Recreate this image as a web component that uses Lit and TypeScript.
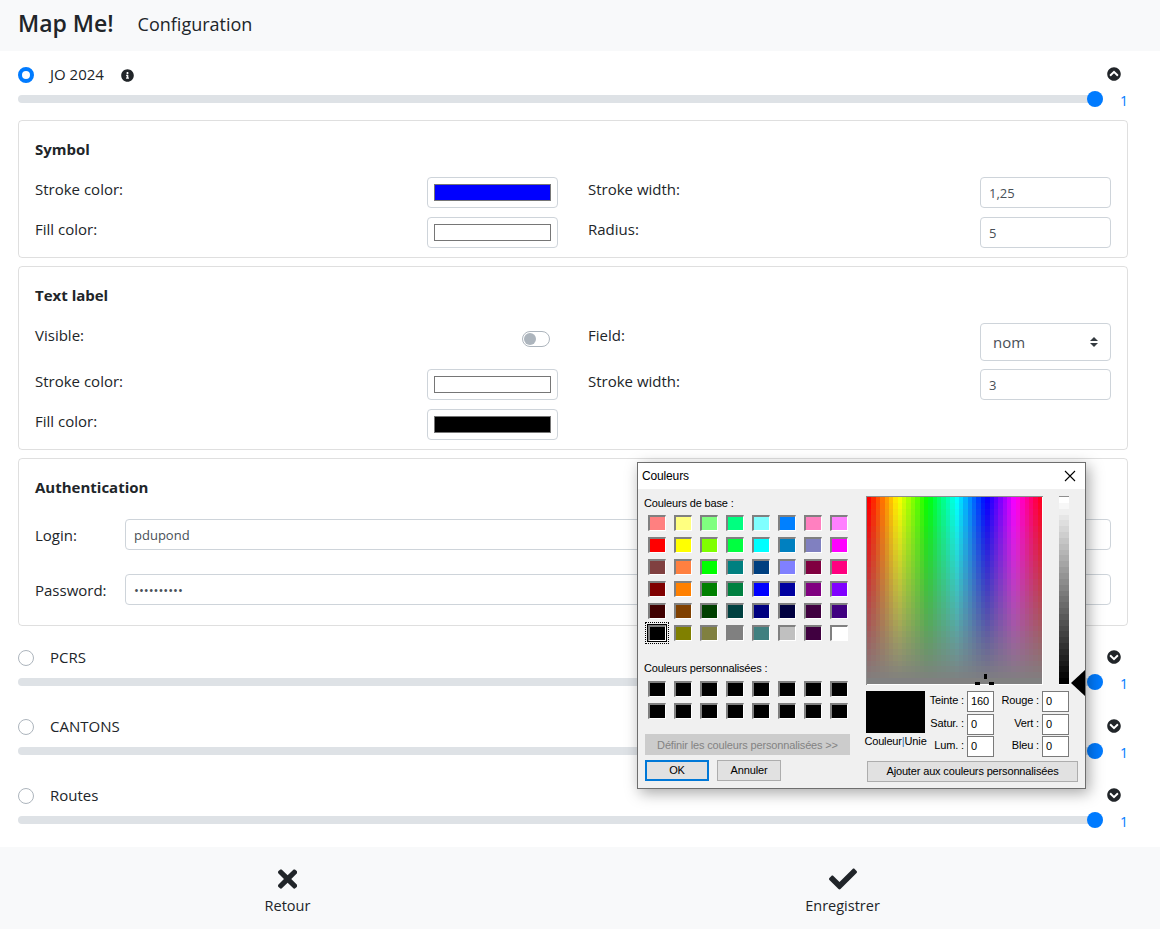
import { LitElement, html, css, svg } from 'lit';
import { customElement, property } from 'lit/decorators.js';

const ICONS = {
  info: 'M256 8C119.043 8 8 119.083 8 256c0 136.997 111.043 248 248 248s248-111.003 248-248C504 119.083 392.957 8 256 8zm0 110c23.196 0 42 18.804 42 42s-18.804 42-42 42-42-18.804-42-42 18.804-42 42-42zm56 254c0 6.627-5.373 12-12 12h-88c-6.627 0-12-5.373-12-12v-24c0-6.627 5.373-12 12-12h12v-64h-12c-6.627 0-12-5.373-12-12v-24c0-6.627 5.373-12 12-12h64c6.627 0 12 5.373 12 12v100h12c6.627 0 12 5.373 12 12v24z',
  up: 'M8 256C8 119 119 8 256 8s248 111 248 248-111 248-248 248S8 393 8 256zm231-113.9L103.5 277.6c-9.4 9.4-9.4 24.6 0 33.9l17 17c9.4 9.4 24.6 9.4 33.9 0L256 226.9l101.6 101.6c9.4 9.4 24.6 9.4 33.9 0l17-17c9.4-9.4 9.4-24.6 0-33.9L273 142.1c-9.4-9.4-24.6-9.4-34 0z',
  down: 'M504 256c0 137-111 248-248 248S8 393 8 256 119 8 256 8s248 111 248 248zM273 369.9l135.5-135.5c9.4-9.4 9.4-24.6 0-33.9l-17-17c-9.4-9.4-24.6-9.4-33.9 0L256 285.1 154.4 183.5c-9.4-9.4-24.6-9.4-33.9 0l-17 17c-9.4 9.4-9.4 24.6 0 33.9L239 369.9c9.4 9.4 24.6 9.4 34 0z',
  check: 'M173.898 439.404l-166.4-166.4c-9.997-9.997-9.997-26.206 0-36.204l36.203-36.204c9.997-9.998 26.207-9.998 36.204 0L192 312.69 432.095 72.596c9.997-9.997 26.207-9.997 36.204 0l36.203 36.204c9.997 9.997 9.997 26.206 0 36.204l-294.4 294.401c-9.998 9.997-26.207 9.997-36.204-.001z',
  times: 'M242.72 256l100.07-100.07c12.28-12.28 12.28-32.19 0-44.48l-22.24-22.24c-12.28-12.28-32.19-12.28-44.48 0L176 189.28 75.93 89.21c-12.28-12.28-32.19-12.28-44.48 0L9.21 111.45c-12.28 12.28-12.28 32.19 0 44.48L109.28 256 9.21 356.07c-12.28 12.28-12.28 32.19 0 44.48l22.24 22.24c12.28 12.28 32.2 12.28 44.48 0L176 322.72l100.07 100.07c12.28 12.28 32.2 12.28 44.48 0l22.24-22.24c12.28-12.28 12.28-32.19 0-44.48L242.72 256z',
};

const BASE_COLORS = [
  '#ff8080', '#ffff80', '#80ff80', '#00ff80', '#80ffff', '#0080ff', '#ff80c0', '#ff80ff',
  '#ff0000', '#ffff00', '#80ff00', '#00ff40', '#00ffff', '#0080c0', '#8080c0', '#ff00ff',
  '#804040', '#ff8040', '#00ff00', '#008080', '#004080', '#8080ff', '#800040', '#ff0080',
  '#800000', '#ff8000', '#008000', '#008040', '#0000ff', '#0000a0', '#800080', '#8000ff',
  '#400000', '#804000', '#004000', '#004040', '#000080', '#000040', '#400040', '#400080',
  '#000000', '#808000', '#808040', '#808080', '#408080', '#c0c0c0', '#400040', '#ffffff',
];

const SPECTRUM_COLS = 40;
const SPECTRUM_ROWS = 32;

function spectrumCells() {
  const cells = [];
  for (let row = 0; row < SPECTRUM_ROWS; row++) {
    for (let col = 0; col < SPECTRUM_COLS; col++) {
      const hue = (col * 360) / SPECTRUM_COLS;
      const sat = 100 - (row * 100) / (SPECTRUM_ROWS - 1);
      cells.push(svg`<rect x=${col} y=${row} width="1.05" height="1.05" fill="hsl(${hue} ${sat}% 50%)"></rect>`);
    }
  }
  return cells;
}

function lumCells() {
  const cells = [];
  for (let row = 0; row < SPECTRUM_ROWS; row++) {
    const lum = 100 - (row * 100) / (SPECTRUM_ROWS - 1);
    cells.push(svg`<rect x="0" y=${row} width="1" height="1.05" fill="hsl(0 0% ${lum}%)"></rect>`);
  }
  return cells;
}

@customElement('color-dialog')
export class ColorDialog extends LitElement {
  static styles = css`
    :host {
      background-color: #F0F0F0;
      border: 1px solid #6E6E6E;
      box-shadow: 3px 4px 14px rgba(0, 0, 0, 0.35);
      box-sizing: border-box;
      color: #000000;
      display: block;
      font-family: "Liberation Sans", Arial, sans-serif;
      font-size: 11px;
      height: 327px;
      left: 637px;
      letter-spacing: -0.15px;
      overflow: visible;
      position: absolute;
      top: 462px;
      width: 449px;
    }

    header {
      align-items: center;
      background-color: #FFFFFF;
      display: flex;
      font-size: 12px;
      height: 26px;
      justify-content: space-between;
      padding: 0 9px 0 4px;
    }

    header svg {
      display: block;
    }

    .body {
      display: flex;
      height: 299px;
      overflow: hidden;
      position: relative;
    }

    .left {
      box-sizing: border-box;
      padding: 6px 0 0 6px;
      width: 228px;
    }

    .caption {
      line-height: 16px;
    }

    .swatches {
      display: grid;
      gap: 6px 8px;
      grid-template-columns: repeat(8, 18px);
      grid-auto-rows: 16px;
      margin: 4px 0 0 4px;
    }

    .custom-caption {
      margin-top: 19px;
    }

    .swatch {
      border-color: #808080 #FFFFFF #FFFFFF #808080;
      border-style: solid;
      border-width: 2px 1px 1px 2px;
      box-sizing: border-box;
    }

    .swatch.selected {
      box-shadow: 0 0 0 1px #000000;
      outline: 1px dotted #000000;
      outline-offset: 2px;
    }

    .swatches.custom {
      margin-top: 5px;
    }

    .custom-define {
      background-color: #CCCCCC;
      border: 1px solid #CCCCCC;
      box-sizing: border-box;
      color: #838383;
      height: 21px;
      line-height: 20px;
      margin: 15px 0 0 1px;
      text-align: center;
      width: 205px;
    }

    .actions {
      display: flex;
      gap: 8px;
      margin: 5px 0 0 1px;
    }

    .btn {
      background-color: #E1E1E1;
      border: 1px solid #ADADAD;
      box-sizing: border-box;
      height: 21px;
      line-height: 19px;
      text-align: center;
      width: 64px;
    }

    .btn.default {
      border: 2px solid #0078D7;
      line-height: 17px;
    }

    .right {
      display: flex;
      flex-direction: column;
      padding-top: 7px;
    }

    .pickers {
      display: flex;
      gap: 16px;
      height: 189px;
    }

    .spectrum {
      background-color: #FFFFFF;
      box-sizing: border-box;
      border-left: 1px solid #8E8E8E;
      border-top: 1px solid #8E8E8E;
      height: 189px;
      position: relative;
      width: 177px;
    }

    .spectrum svg {
      display: block;
      height: 187px;
      width: 175px;
    }

    .cross {
      background-color: #000000;
      position: absolute;
    }

    .cross.n {
      height: 5px;
      left: 117px;
      top: 177px;
      width: 3px;
    }

    .cross.w {
      height: 3px;
      left: 108px;
      top: 185px;
      width: 5px;
    }

    .cross.e {
      height: 3px;
      left: 122px;
      top: 185px;
      width: 5px;
    }

    .lum {
      background-color: #FFFFFF;
      border-top: 1px solid #8E8E8E;
      height: 188px;
      width: 10px;
    }

    .lum svg {
      display: block;
      height: 187px;
      width: 10px;
    }

    .arrow {
      border-bottom: 13.5px solid transparent;
      border-right: 14px solid #000000;
      border-top: 13.5px solid transparent;
      height: 0;
      left: 433px;
      position: absolute;
      top: 181px;
      width: 0;
    }

    .values {
      display: flex;
      margin-top: 6px;
    }

    .preview {
      width: 59px;
    }

    .solid {
      background-color: #000000;
      height: 42px;
    }

    .solid-caption {
      line-height: 16px;
      margin: 0 -4px;
      text-align: center;
      white-space: nowrap;
    }

    .solid-caption span {
      color: #2A6FB5;
    }

    .fields {
      align-items: center;
      display: grid;
      gap: 1.5px 3px;
      grid-template-columns: 39px 27px 42px 27px;
      grid-auto-rows: 21px;
    }

    .fields label {
      line-height: 19px;
      padding-bottom: 2px;
      text-align: right;
      white-space: nowrap;
    }

    .field {
      background-color: #FFFFFF;
      border: 1px solid #7A7A7A;
      box-sizing: border-box;
      height: 21px;
      line-height: 18px;
      padding-left: 3px;
    }

    .add {
      margin: 4px 0 0 1px;
      white-space: nowrap;
      width: 211px;
    }
  `;

  render() {
    return html`
      <header>
        <span>Couleurs</span>
        <svg width="12" height="12" viewBox="0 0 12 12">
          <path d="M1 1l10 10M11 1L1 11" stroke="#000" stroke-width="1.1" fill="none"></path>
        </svg>
      </header>
      <div class="body">
        <div class="left">
          <div class="caption">Couleurs de base :</div>
          <div class="swatches">
            ${BASE_COLORS.map((color, i) => html`
              <div class="swatch ${i === 40 ? 'selected' : ''}" style="background-color: ${color}"></div>
            `)}
          </div>
          <div class="caption custom-caption">Couleurs personnalisées :</div>
          <div class="swatches custom">
            ${Array.from({ length: 16 }).map(() => html`
              <div class="swatch" style="background-color: #000000"></div>
            `)}
          </div>
          <div class="custom-define">Définir les couleurs personnalisées &gt;&gt;</div>
          <div class="actions">
            <div class="btn default">OK</div>
            <div class="btn">Annuler</div>
          </div>
        </div>
        <div class="right">
          <div class="pickers">
            <div class="spectrum">
              <svg viewBox="0 0 ${SPECTRUM_COLS} ${SPECTRUM_ROWS}" preserveAspectRatio="none" shape-rendering="crispEdges">
                ${spectrumCells()}
              </svg>
              <div class="cross n"></div>
              <div class="cross w"></div>
              <div class="cross e"></div>
            </div>
            <div class="lum">
              <svg viewBox="0 0 1 ${SPECTRUM_ROWS}" preserveAspectRatio="none" shape-rendering="crispEdges">
                ${lumCells()}
              </svg>
            </div>
          </div>
          <div class="values">
            <div class="preview">
              <div class="solid"></div>
              <div class="solid-caption">Couleur<span>|</span>Unie</div>
            </div>
            <div class="fields">
              <label>Teinte :</label><div class="field">160</div>
              <label>Rouge :</label><div class="field">0</div>
              <label>Satur. :</label><div class="field">0</div>
              <label>Vert :</label><div class="field">0</div>
              <label>Lum. :</label><div class="field">0</div>
              <label>Bleu :</label><div class="field">0</div>
            </div>
          </div>
          <div class="btn add">Ajouter aux couleurs personnalisées</div>
        </div>
        <div class="arrow"></div>
      </div>
    `;
  }
}

@customElement('layer-row')
export class LayerRow extends LitElement {
  @property({ type: String }) name: string = '';
  @property({ type: Boolean }) open: boolean = false;
  @property({ type: Boolean }) info: boolean = false;

  static styles = css`
    :host {
      display: block;
      padding-bottom: 25px;
    }

    :host([open]) {
      padding-bottom: 20px;
    }

    .head {
      align-items: center;
      display: flex;
      height: 24px;
    }

    .radio {
      border: 1px solid #ADB5BD;
      border-radius: 50%;
      box-sizing: border-box;
      height: 16px;
      width: 16px;
    }

    .radio.on {
      border: 4px solid #007BFF;
    }

    .name {
      margin-left: 16px;
      margin-top: -2px;
    }

    .info {
      height: 13px;
      margin-left: 17px;
      width: 13px;
    }

    .toggle {
      height: 14px;
      margin-left: auto;
      margin-right: 21px;
      margin-top: -2px;
      width: 14px;
    }

    .slide {
      align-items: flex-start;
      display: flex;
      margin-top: 4px;
    }

    input {
      appearance: none;
      background: transparent;
      display: block;
      height: 16px;
      margin: 0;
      width: 1085px;
    }

    input::-webkit-slider-runnable-track {
      background-color: #DEE2E6;
      border-radius: 8px;
      height: 8px;
    }

    input::-webkit-slider-thumb {
      appearance: none;
      background-color: #007BFF;
      border-radius: 50%;
      height: 16px;
      margin-top: -4px;
      width: 16px;
    }

    .value {
      color: #007BFF;
      font-size: 14px;
      height: 16px;
      line-height: 20px;
      margin-left: 17px;
    }

    .cards {
      margin-top: 13px;
    }

    svg {
      fill: #212529;
    }
  `;

  render() {
    return html`
      <div class="head">
        <div class="radio ${this.open ? 'on' : ''}"></div>
        <span class="name">${this.name}</span>
        ${this.info
          ? html`<svg class="info" viewBox="0 0 512 512"><path d=${ICONS.info}></path></svg>`
          : ''}
        <svg class="toggle" viewBox="0 0 512 512"><path d=${this.open ? ICONS.up : ICONS.down}></path></svg>
      </div>
      <div class="slide">
        <input type="range" min="0" max="1" step="0.1" value="1" />
        <span class="value">1</span>
      </div>
      ${this.open ? html`<div class="cards"><slot></slot></div>` : ''}
    `;
  }
}

@customElement('app-root')
export class AppRoot extends LitElement {
  static styles = css`
    :host {
      color: #212529;
      display: block;
      font-family: "Open Sans", "Noto Sans", sans-serif;
      font-size: 15px;
      height: 929px;
      line-height: 24px;
      overflow: hidden;
      position: relative;
    }

    .topbar {
      align-items: center;
      background-color: #F8F9FA;
      display: flex;
      gap: 24px;
      height: 51px;
      padding: 0 18px;
    }

    .brand {
      font-size: 23px;
      font-weight: 600;
      margin-top: -5px;
    }

    .title {
      font-size: 18px;
      margin-top: -3px;
    }

    main {
      box-sizing: border-box;
      height: 796px;
      padding: 12px 18px 0;
    }

    .card {
      border: 1px solid rgba(0, 0, 0, 0.125);
      border-radius: 4px;
      margin-bottom: 8px;
      padding: 17px 16px 9px;
      width: 1076px;
    }

    .card:last-child {
      margin-bottom: 0;
      padding-bottom: 20px;
    }

    .card h3 {
      font-size: 15px;
      font-weight: 700;
      line-height: 22px;
      margin: 0 0 17px;
    }

    .grid {
      align-items: start;
      column-gap: 30px;
      display: grid;
      grid-template-columns: 523px 523px;
      row-gap: 9px;
    }

    .cell {
      align-items: flex-start;
      display: flex;
      justify-content: space-between;
    }

    .swatch {
      appearance: none;
      background-color: #FFFFFF;
      border: 1px solid #CED4DA;
      border-radius: 4px;
      box-sizing: border-box;
      display: block;
      height: 31px;
      margin: 0;
      padding: 6px;
      width: 131px;
    }

    .swatch::-webkit-color-swatch-wrapper {
      padding: 0;
    }

    .swatch::-webkit-color-swatch {
      border: 1px solid #767676;
      border-radius: 0;
    }

    .number {
      background-color: #FFFFFF;
      border: 1px solid #CED4DA;
      border-radius: 4px;
      box-sizing: border-box;
      color: #495057;
      display: block;
      font: inherit;
      font-size: 13px;
      height: 31px;
      padding: 0 8px;
      width: 131px;
    }

    .select {
      appearance: none;
      background: #FFFFFF url("data:image/svg+xml,%3csvg xmlns='http://www.w3.org/2000/svg' width='4' height='5' viewBox='0 0 4 5'%3e%3cpath fill='%23343a40' d='M2 0L0 2h4zm0 5L0 3h4z'/%3e%3c/svg%3e") no-repeat right 12px center / 8px 10px;
      border: 1px solid #CED4DA;
      border-radius: 4px;
      box-sizing: border-box;
      color: #495057;
      display: block;
      font: inherit;
      height: 38px;
      margin-bottom: -1px;
      padding: 0 12px;
      width: 131px;
    }

    .switch {
      border: 1px solid #ADB5BD;
      border-radius: 8px;
      box-sizing: border-box;
      height: 16px;
      margin: 8px 8px 0 0;
      padding: 1px;
      width: 28px;
    }

    .switch div {
      background-color: #ADB5BD;
      border-radius: 50%;
      height: 12px;
      width: 12px;
    }

    .auth {
      align-items: center;
      display: grid;
      grid-template-columns: 90px 986px;
      margin-top: 21px;
      row-gap: 24px;
    }

    .auth .number {
      width: 986px;
    }

    footer {
      background-color: #F8F9FA;
      display: grid;
      grid-template-columns: 555px 555px;
      height: 82px;
      padding-left: 10px;
    }

    .action {
      align-items: center;
      display: flex;
      flex-direction: column;
      font-size: 14.5px;
      padding-top: 18px;
    }

    .action svg {
      display: block;
      fill: #212529;
      height: 28px;
      margin-bottom: 1px;
    }
  `;

  renderSymbol() {
    return html`
      <section class="card">
        <h3>Symbol</h3>
        <div class="grid">
          <div class="cell"><span>Stroke color:</span><input class="swatch" type="color" value="#0000ff" /></div>
          <div class="cell"><span>Stroke width:</span><input class="number" value="1,25" /></div>
          <div class="cell"><span>Fill color:</span><input class="swatch" type="color" value="#ffffff" /></div>
          <div class="cell"><span>Radius:</span><input class="number" value="5" /></div>
        </div>
      </section>
    `;
  }

  renderLabel() {
    return html`
      <section class="card">
        <h3>Text label</h3>
        <div class="grid">
          <div class="cell"><span>Visible:</span><div class="switch"><div></div></div></div>
          <div class="cell"><span>Field:</span><select class="select"><option>nom</option></select></div>
          <div class="cell"><span>Stroke color:</span><input class="swatch" type="color" value="#ffffff" /></div>
          <div class="cell"><span>Stroke width:</span><input class="number" value="3" /></div>
          <div class="cell"><span>Fill color:</span><input class="swatch" type="color" value="#000000" /></div>
        </div>
      </section>
    `;
  }

  renderAuth() {
    return html`
      <section class="card">
        <h3>Authentication</h3>
        <div class="auth">
          <span>Login:</span><input class="number" value="pdupond" />
          <span>Password:</span><input class="number" type="password" value="motdepasse" />
        </div>
      </section>
    `;
  }

  render() {
    return html`
      <div class="topbar">
        <span class="brand">Map Me!</span>
        <span class="title">Configuration</span>
      </div>
      <main>
        <layer-row name="JO 2024" open info>
          ${this.renderSymbol()}
          ${this.renderLabel()}
          ${this.renderAuth()}
        </layer-row>
        <layer-row name="PCRS"></layer-row>
        <layer-row name="CANTONS"></layer-row>
        <layer-row name="Routes"></layer-row>
      </main>
      <footer>
        <div class="action">
          <svg viewBox="0 0 352 512"><path d=${ICONS.times}></path></svg>
          <span>Retour</span>
        </div>
        <div class="action">
          <svg viewBox="0 0 512 512"><path d=${ICONS.check}></path></svg>
          <span>Enregistrer</span>
        </div>
      </footer>
      <color-dialog></color-dialog>
    `;
  }
}
